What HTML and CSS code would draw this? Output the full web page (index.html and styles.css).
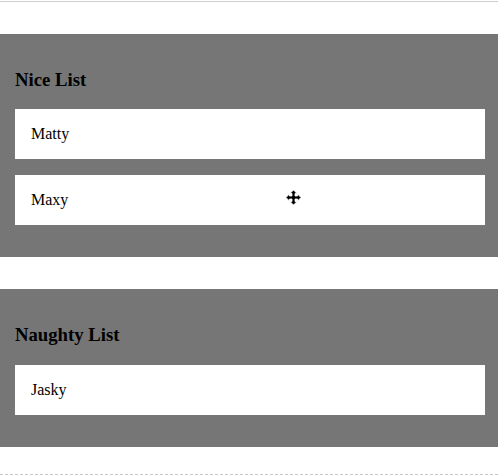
FILE: index.html
```html
<!doctype html>
<html lang="en">
<head>
    <meta charset="UTF-8">
    <title>Lists</title>
    <link rel="stylesheet" href="styles.css">
</head>
<body>
    <div id="wrapper">
        <section class="list_box">
            <h3>Nice List</h3>
            <div class="list_item">Matty</div>
            <div class="list_item">Maxy</div>
        </section>

        <section class="list_box">
            <h3>Naughty List</h3>
            <div class="list_item">Jasky</div>
        </section>
    </div>

    <svg class="move_cursor" width="15" height="15" viewBox="0 0 15 15">
        <path d="M7.5 0 L11 3.5 L9 3.5 L9 6 L11.5 6 L11.5 4 L15 7.5 L11.5 11 L11.5 9 L9 9 L9 11.5 L11 11.5 L7.5 15 L4 11.5 L6 11.5 L6 9 L3.5 9 L3.5 11 L0 7.5 L3.5 4 L3.5 6 L6 6 L6 3.5 L4 3.5 Z" fill="#000" stroke="#fff" stroke-width="0.8"/>
    </svg>
</body>
</html>
```

FILE: styles.css
```css
body {
    margin: 0;
    padding: 1px 0 0;
    font-family: 'Liberation Serif', 'Times New Roman', serif;
    background: #fff;
    color: #000;
}

#wrapper {
    border-top: 1px solid #cfcfcf;
    border-bottom: 1px dashed #c8c8c8;
    padding: 32px 0 27px;
    display: flex;
    flex-direction: column;
    gap: 32px;
}

.list_box {
    background: #767676;
    padding: 16px 13px 16px 15px;
}

.list_box h3 {
    margin: 18.72px 0;
    font-size: 18.72px;
    font-weight: bold;
}

.list_item {
    background: #fff;
    padding: 16px;
    font-size: 16px;
    line-height: 18px;
    margin-bottom: 16px;
}

.move_cursor {
    position: absolute;
    left: 286px;
    top: 190px;
}
```
